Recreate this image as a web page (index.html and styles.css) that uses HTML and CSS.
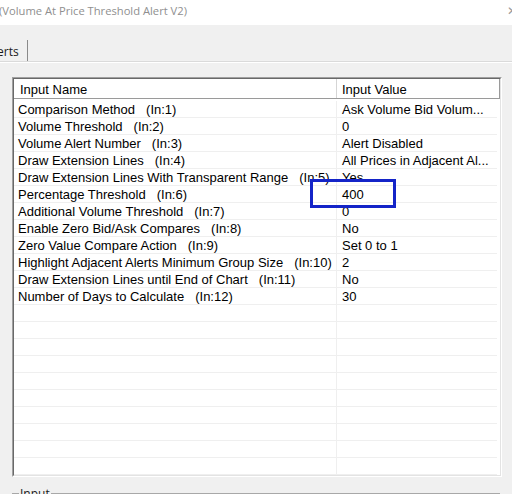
FILE: index.html
```html
<!DOCTYPE html>
<html>
<head>
<meta charset="utf-8">
<link rel="stylesheet" href="styles.css">
</head>
<body>
<div class="window">
  <div class="titlebar">
    <span class="title">(Volume At Price Threshold Alert V2)</span>
    <span class="close">✕</span>
  </div>
  <div class="tabstrip">
    <div class="tab">erts</div>
  </div>
  <div class="panel">
    <div class="listbox">
      <div class="listinner">
        <div class="header">
          <div class="hname">Input Name</div>
          <div class="hvalue">Input Value</div>
        </div>
        <div class="body">
          <div class="row"><div class="name">Comparison Method<span class="in">(In:1)</span></div><div class="value">Ask Volume Bid Volum...</div></div>
          <div class="row"><div class="name">Volume Threshold<span class="in">(In:2)</span></div><div class="value">0</div></div>
          <div class="row"><div class="name">Volume Alert Number<span class="in">(In:3)</span></div><div class="value">Alert Disabled</div></div>
          <div class="row"><div class="name">Draw Extension Lines<span class="in">(In:4)</span></div><div class="value">All Prices in Adjacent Al...</div></div>
          <div class="row"><div class="name">Draw Extension Lines With Transparent Range<span class="in">(In:5)</span></div><div class="value">Yes</div></div>
          <div class="row"><div class="name">Percentage Threshold<span class="in">(In:6)</span></div><div class="value">400</div></div>
          <div class="row"><div class="name">Additional Volume Threshold<span class="in">(In:7)</span></div><div class="value">0</div></div>
          <div class="row"><div class="name">Enable Zero Bid/Ask Compares<span class="in">(In:8)</span></div><div class="value">No</div></div>
          <div class="row"><div class="name">Zero Value Compare Action<span class="in">(In:9)</span></div><div class="value">Set 0 to 1</div></div>
          <div class="row"><div class="name">Highlight Adjacent Alerts Minimum Group Size<span class="in">(In:10)</span></div><div class="value">2</div></div>
          <div class="row"><div class="name">Draw Extension Lines until End of Chart<span class="in">(In:11)</span></div><div class="value">No</div></div>
          <div class="row"><div class="name">Number of Days to Calculate<span class="in">(In:12)</span></div><div class="value">30</div></div>
          <div class="row"><div class="name"></div><div class="value"></div></div>
          <div class="row"><div class="name"></div><div class="value"></div></div>
          <div class="row"><div class="name"></div><div class="value"></div></div>
          <div class="row"><div class="name"></div><div class="value"></div></div>
          <div class="row"><div class="name"></div><div class="value"></div></div>
          <div class="row"><div class="name"></div><div class="value"></div></div>
          <div class="row"><div class="name"></div><div class="value"></div></div>
          <div class="row"><div class="name"></div><div class="value"></div></div>
          <div class="row"><div class="name"></div><div class="value"></div></div>
          <div class="row"><div class="name"></div><div class="value"></div></div>
        </div>
      </div>
    </div>
    <fieldset class="groupbox"><legend class="legend">Input</legend></fieldset>
  </div>
  <div class="highlight"></div>
</div>
</body>
</html>
```
FILE: styles.css
```css
html, body {
  margin: 0;
  padding: 0;
}
body {
  background: #f0f0f0;
  width: 512px;
  height: 494px;
  overflow: hidden;
}
.window {
  position: relative;
  width: 512px;
  height: 494px;
  overflow: hidden;
}
.titlebar {
  height: 25px;
  background: #ffffff;
  display: flex;
  justify-content: space-between;
  align-items: center;
  font-family: "Open Sans", "Noto Sans", sans-serif;
  font-size: 11.2px;
  color: #8f8f8f;
}
.title {
  margin-left: -1px;
  margin-top: -4px;
}
.close {
  margin-right: -5px;
  margin-top: -4px;
  font-size: 12px;
  color: #9a9a9a;
}
.tabstrip {
  height: 38px;
  box-sizing: border-box;
  border-bottom: 1px solid #ffffff;
  display: flex;
  align-items: flex-end;
  box-shadow: 0 -1px 0 #dadada inset;
}
.tab {
  height: 21px;
  box-sizing: border-box;
  width: 31px;
  border-right: 1px solid #8a8a8a;
  font-family: "Open Sans", "Noto Sans", sans-serif;
  font-size: 12px;
  color: #1a1a1a;
  margin-left: -3px;
  padding-top: 3px;
  line-height: 18px;
  margin-bottom: 1px;
}
.panel {
  padding: 14px 10px 0 12px;
}
.listbox {
  width: 490px;
  height: 400px;
  box-sizing: border-box;
  border: 1px solid;
  border-color: #a0a0a0 #ffffff #ffffff #a0a0a0;
}
.listinner {
  height: 100%;
  box-sizing: border-box;
  border: 1px solid;
  border-color: #696969 #e3e3e3 #e3e3e3 #696969;
  background: #ffffff;
  font-family: "Liberation Sans", Arial, sans-serif;
  font-size: 13px;
  color: #000000;
  overflow: hidden;
}
.header {
  display: flex;
  height: 20px;
  box-sizing: border-box;
  border-bottom: 1px solid #9a9a9a;
  border-right: 1px solid #9a9a9a;
  padding-top: 2px;
  line-height: 17px;
}
.hname {
  width: 323px;
  box-sizing: border-box;
  padding-left: 6px;
  margin-top: -2px;
  padding-top: 2px;
  border-right: 1px solid #d5d5d5;
}
.hvalue {
  flex: 1;
  padding-left: 5px;
}
.body {
  padding: 2px 3px 0 0;
}
.row {
  display: flex;
  height: 17px;
  box-sizing: border-box;
  border-bottom: 1px solid #efefef;
  line-height: 14px;
  white-space: nowrap;
}
.name {
  width: 323px;
  box-sizing: border-box;
  padding-left: 4px;
  padding-top: 2px;
  border-right: 1px solid #efefef;
  overflow: visible;
}
.in {
  margin-left: 11px;
}
.value {
  flex: 1;
  padding-left: 5px;
  padding-top: 2px;
  overflow: hidden;
}
.groupbox {
  margin: 8px 0 0 0;
  padding: 0;
  width: 488px;
  height: 40px;
  box-sizing: border-box;
  border: 1px solid #a8a8a8;
  box-shadow: 1px 1px 0 #ffffff inset;
}
.legend {
  font-family: "Open Sans", "Noto Sans", sans-serif;
  font-size: 12px;
  color: #1a1a1a;
  padding: 0 1px;
  margin-left: 6px;
}
.highlight {
  position: absolute;
  left: 310px;
  top: 179px;
  width: 86px;
  height: 29px;
  box-sizing: border-box;
  border: 3px solid #1424c8;
}
```
